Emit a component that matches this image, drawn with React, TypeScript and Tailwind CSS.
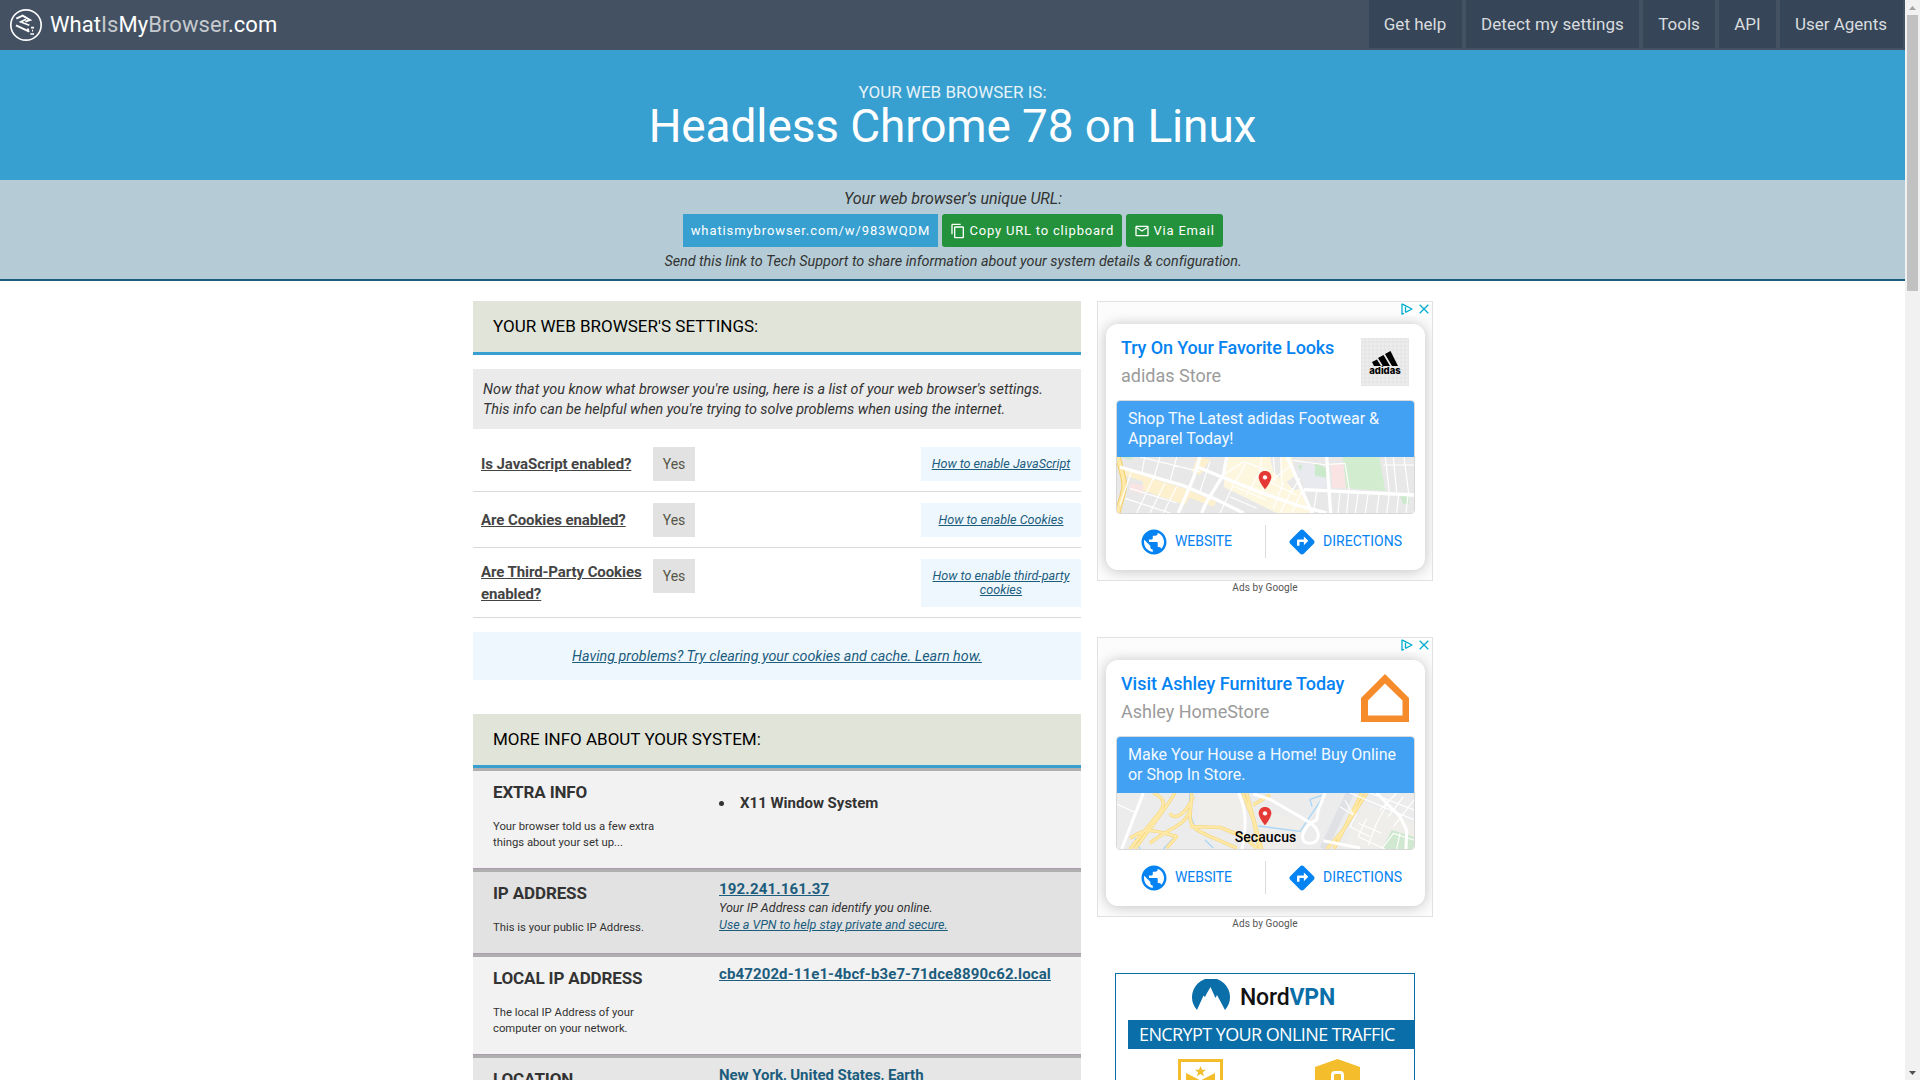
import type { ReactNode } from "react";
import { MdContentCopy, MdDirections, MdMailOutline, MdPublic } from "react-icons/md";

const NAV = [
  { label: "Get help", cls: "w-[93px] pr-px" },
  { label: "Detect my settings", cls: "w-[173px] tracking-[0.09px]" },
  { label: "Tools", cls: "w-[72px]" },
  { label: "API", cls: "w-[57px]" },
  { label: "User Agents", cls: "w-[123px] pr-px" },
];

function Logo() {
  return (
    <svg viewBox="30 27 96 96" className="h-8 w-8" fill="none" stroke="#fff">
      <circle cx="78" cy="75" r="45.5" strokeWidth="5" />
      <path d="M49 56L68 47L90 60L76 65" strokeWidth="6" />
      <path d="M78 58L62 66L88 76" strokeWidth="5" />
      <path d="M48 76L88 95" strokeWidth="6" />
      <path d="M93 83h9M81 88h6M96 92h3M91 102h11" strokeWidth="5" />
    </svg>
  );
}

function Header() {
  return (
    <header className="flex h-[50px] items-start justify-between bg-[#435163]">
      <div className="flex h-[50px] items-center pl-[10px]">
        <Logo />
        <div className="ml-2 text-[22px] leading-[50px] tracking-[0.06px] text-white">
          What<span className="text-[#c6cace]">Is</span>My<span className="text-[#c6cace]">Browser</span>.com
        </div>
      </div>
      <nav className="mr-[2px] flex gap-1">
        {NAV.map((n) => (
          <a
            key={n.label}
            className={`${n.cls} h-12 bg-[#364658] text-center text-[17px] leading-[49px] whitespace-nowrap text-[#d9dcdf]`}
          >
            {n.label}
          </a>
        ))}
      </nav>
    </header>
  );
}

function Hero() {
  return (
    <>
      <section className="h-[130px] bg-[#37a0d0] pt-8 text-center">
        <div className="text-[17px] leading-5 text-[#e8f3f9]">YOUR WEB BROWSER IS:</div>
        <h1 className="text-[46px] leading-[48px] tracking-[-0.13px] text-white">Headless Chrome 78 on Linux</h1>
      </section>
      <section className="h-[101px] border-b-2 border-[#1c5d7d] bg-[#b5ccd6] pt-[8px] text-center text-[#333]">
        <div className="pl-px text-[16px] leading-[21px] tracking-[-0.08px] italic">Your web browser&apos;s unique URL:</div>
        <div className="mt-[5px] flex justify-center gap-1 text-[13px] leading-[33px] whitespace-nowrap text-white">
          <div className="h-[33px] w-[255px] bg-[#37a0d0] pl-px tracking-[0.9px]">whatismybrowser.com/w/983WQDM</div>
          <div className="flex h-[33px] w-[180px] items-center rounded-[3px] bg-[#24913c] pl-2 tracking-[0.8px]">
            <MdContentCopy className="mr-1 h-4 w-4" />
            Copy URL to clipboard
          </div>
          <div className="flex h-[33px] w-[97px] items-center rounded-[3px] bg-[#24913c] pl-2 tracking-[0.8px]">
            <MdMailOutline className="mr-1 h-4 w-4" />
            Via Email
          </div>
        </div>
        <div className="mt-[5px] pl-px text-[14.4px] leading-5 tracking-[-0.025px] italic">
          Send this link to Tech Support to share information about your system details &amp; configuration.
        </div>
      </section>
    </>
  );
}

function SectionTitle({ children }: { children: ReactNode }) {
  return (
    <h2 className="h-[54px] border-b-[3px] border-[#37a0d0] bg-[#e1e4d9] pl-5 text-[17px] leading-[51px] text-black">
      {children}
    </h2>
  );
}

function Setting({ name, help, tall }: { name: string; help: string; tall?: boolean }) {
  return (
    <div className={`${tall ? "h-[70px]" : "h-14"} flex items-start border-b border-[#d9d9d9] pt-[11px]`}>
      <div
        className={`${tall ? "mt-[2px] leading-[22px]" : "leading-[34px]"} w-[180px] pl-2 text-[15px] font-bold tracking-[-0.09px] text-[#444] underline`}
      >
        {name}
      </div>
      <div className="h-[34px] w-[42px] bg-[#e2e2e2] text-center text-[14px] leading-[34px] text-[#555548]">Yes</div>
      <div className="ml-auto w-[160px] bg-[#eff7fe] px-[10px] py-[10px] text-center text-[12.6px] leading-[14px] text-[#1c5d7d] italic underline">
        {help}
      </div>
    </div>
  );
}

function InfoRow({
  title,
  note,
  cls,
  children,
}: {
  title: string;
  note: string;
  cls: string;
  children: ReactNode;
}) {
  return (
    <div className={`${cls} flex border-t-[3px] border-[#afafaf]`}>
      <div className="w-[226px] pt-[11px] pl-5 text-[#333]">
        <h3 className="text-[17px] leading-5 font-bold tracking-[-0.13px]">{title}</h3>
        <p className="mt-[17px] w-[180px] text-[11.3px] leading-4">{note}</p>
      </div>
      <div className="ml-5 flex-1 text-[15px] font-bold whitespace-nowrap text-[#333]">{children}</div>
    </div>
  );
}

function MainColumn() {
  return (
    <main className="w-[608px]">
      <SectionTitle>YOUR WEB BROWSER&apos;S SETTINGS:</SectionTitle>
      <p className="mt-[14px] h-[60px] bg-[#ebebeb] px-[10px] pt-[11px] text-[14.35px] leading-5 text-[#333] italic">
        <span className="tracking-[0.01px]">
          Now that you know what browser you&apos;re using, here is a list of your web browser&apos;s settings.
        </span>
        <br />
        <span className="tracking-[-0.03px]">
          This info can be helpful when you&apos;re trying to solve problems when using the internet.
        </span>
      </p>
      <div className="mt-[7px]">
        <Setting name="Is JavaScript enabled?" help="How to enable JavaScript" />
        <Setting name="Are Cookies enabled?" help="How to enable Cookies" />
        <Setting name="Are Third-Party Cookies enabled?" help="How to enable third-party cookies" tall />
      </div>
      <div className="mt-[14px] mb-[34px] h-12 bg-[#eff7fe] text-center text-[14.33px] leading-[48px] text-[#1c5d7d] italic underline">
        Having problems? Try clearing your cookies and cache. Learn how.
      </div>
      <SectionTitle>MORE INFO ABOUT YOUR SYSTEM:</SectionTitle>
      <InfoRow
        title="EXTRA INFO"
        note="Your browser told us a few extra things about your set up..."
        cls="h-[101px] border-b border-b-[#ab9dab] bg-[#f2f2f2]"
      >
        <div className="flex items-center pt-[21px] leading-[22px]">
          <span className="mr-[16px] h-[5px] w-[5px] rounded-full bg-[#333]" />
          X11 Window System
        </div>
      </InfoRow>
      <InfoRow
        title="IP ADDRESS"
        note="This is your public IP Address."
        cls="h-[85px] border-b border-b-[#ab9dab] bg-[#e2e2e2]"
      >
        <div className="pt-[7px] leading-5 tracking-[0.18px] text-[#1c5d7d] underline">192.241.161.37</div>
        <div className="text-[12.55px] leading-[17px] font-normal italic">
          Your IP Address can identify you online.
          <br />
          <span className="text-[#1c5d7d] underline">Use a VPN to help stay private and secure.</span>
        </div>
      </InfoRow>
      <InfoRow
        title="LOCAL IP ADDRESS"
        note="The local IP Address of your computer on your network."
        cls="h-[101px] border-b border-b-[#ab9dab] bg-[#f2f2f2]"
      >
        <div className="pt-[7px] leading-5 tracking-[0.12px] text-[#1c5d7d] underline">
          cb47202d-11e1-4bcf-b3e7-71dce8890c62.local
        </div>
      </InfoRow>
      <InfoRow title="LOCATION" note="Your approximate location." cls="h-[101px] bg-[#e6e6e6]">
        <div className="pt-[7px] leading-5 tracking-[-0.04px] text-[#1c5d7d] underline">
          New York, United States, Earth
        </div>
      </InfoRow>
    </main>
  );
}

function Pin({ y }: { y: number }) {
  return (
    <g>
      <path d={`M465 ${y}c-11 0-19 8-19 19 0 14 19 36 19 36s19-22 19-36c0-11-8-19-19-19z`} fill="#e53935" />
      <circle cx="465" cy={y + 19} r="6.5" fill="#fff" />
    </g>
  );
}

function StreetMap() {
  return (
    <svg viewBox="21 6 891 168" preserveAspectRatio="none" className="h-14 w-[297px]">
      <rect x="21" y="6" width="891" height="168" fill="#e8e8e8" />
      <path d="M355 6H545L560 80L600 174H500L340 95Z" fill="#fef7e0" />
      <path d="M30 40L220 100L320 140L310 155L210 118L40 60ZM100 80L240 125L225 150L95 105ZM262 6L300 14L270 60L245 50Z" fill="#fcf0cf" />
      <path d="M350 125L420 150L410 174H335ZM480 6H512L510 70L490 50ZM530 80L560 60L580 100L550 106Z" fill="#e8e8e8" />
      <path d="M575 20L650 40V100H590L560 50Z" fill="#e8eaf0" />
      <path d="M615 24L650 40V68L615 62ZM566 30h12l-8 20ZM870 122h26v26h-16ZM30 6h40l-10 8z" fill="#cbeacb" />
      <path d="M698 6H808L826 108L708 100Z" fill="#d1eccf" />
      <path d="M662 28L700 26L708 100H668ZM62 84L102 92L94 118L58 106Z" fill="#fae3e3" />
      <path d="M24 6C34 50 48 80 40 110C34 140 26 150 24 174" stroke="#f4cf6c" strokeWidth="17" fill="none" />
      <path d="M24 6C34 50 48 80 40 110C34 140 26 150 24 174" stroke="#ffe9a8" strokeWidth="11" fill="none" />
      <g stroke="#fff" fill="none">
        <path
          d="M30 36L220 92L320 134L400 174M270 6L250 70L205 174M350 6L340 60L290 140L275 174M262 36L440 108L560 150L650 174M532 6L606 174M650 6L662 174M582 104L912 120"
          strokeWidth="10"
        />
        <path
          d="M64 50L30 150M104 6L95 60M150 6L130 75M200 6L180 80M60 100L200 144M45 130L180 174M130 70L80 174M165 85L120 174M200 95L160 174M90 6L270 50M300 20L270 110M410 20L370 90L330 174M340 60L400 20L470 45M360 125L440 160M375 95L470 135M455 6L450 50L410 120M480 70L450 120M520 85L490 160M548 100L510 174M575 110L545 174M440 62L560 120M490 6L496 80M512 6L516 90M545 30L480 80M570 70L545 110M620 110L610 174M690 110L684 174M716 110L710 174M745 112L736 174M775 112L766 174M808 112L800 174M838 115L830 174M866 116L860 174M894 118L888 174M826 6L838 112M850 6L860 112M882 6L896 115M820 30H912M655 28L705 25L718 104M550 16L650 30"
          strokeWidth="3.5"
        />
      </g>
      <Pin y={48} />
    </svg>
  );
}

function HighwayMap() {
  const yellow =
    "M245 9L240 85C245 115 262 120 290 135L380 174M130 9C175 30 165 50 130 90L60 177M195 9C165 60 130 100 75 177M60 145C110 110 130 120 200 140L170 174M180 70C190 90 225 80 250 20M240 60C225 110 180 110 120 160M240 110L330 112L400 140L440 174M398 9L430 90L448 177M410 9L455 177M430 45L480 15M770 9L700 120L650 177M755 9L720 80L672 177";
  return (
    <svg viewBox="21 9 891 168" preserveAspectRatio="none" className="h-14 w-[297px]">
      <rect x="21" y="9" width="891" height="168" fill="#ececec" />
      <path d="M265 9H390L405 120L262 125ZM450 60L580 90L560 177H450ZM760 40L912 100V177H700Z" fill="#f0eeeb" />
      <path d="M845 120L912 140V177H815Z" fill="#cfe8cf" />
      <path
        d="M240 10C235 60 245 100 265 125M75 145L90 177M160 177L190 145M445 108L570 124L640 20M606 50L600 28L635 16M285 150L310 174"
        stroke="#a9d6f7"
        strokeWidth="4"
        fill="none"
      />
      <path d="M720 9L640 177" stroke="#dfe1e5" strokeWidth="24" />
      <path d={yellow} stroke="#f5d274" strokeWidth="10" fill="none" strokeLinejoin="round" />
      <path d={yellow} stroke="#ffe9a6" strokeWidth="7" fill="none" strokeLinejoin="round" />
      <g stroke="#fff" fill="none">
        <path
          d="M100 9L35 177M386 9C410 60 410 110 396 177M430 12L480 28L590 92C640 120 630 160 600 160C570 160 570 130 600 100L620 90L625 60L645 9M640 152L750 174M800 9L830 40L870 80L890 120L888 177"
          strokeWidth="9"
        />
        <path
          d="M21 42L80 70M705 30L730 75M720 9L912 90M690 50L730 75M740 70L720 110L780 140M770 85L745 140L825 177M745 100L815 130M800 100L775 165M830 45L800 100M860 9L810 60M880 20L835 80M912 30L850 110M780 9L912 60M815 177L850 130L912 150M870 130L860 177"
          strokeWidth="3.5"
        />
      </g>
      <Pin y={51} />
    </svg>
  );
}

function AdidasLogo() {
  return (
    <div className="flex h-12 w-12 flex-col items-center bg-[#e5e5e5] bg-[radial-gradient(#ececec_45%,#dedede_100%)] bg-[length:4px_4px] pt-[13px]">
      <svg viewBox="0 0 26 15" className="h-[15px] w-[26px] shrink-0" fill="#000">
        <path d="M0 11L5 8.5L9 15H2ZM6 7L11.5 4L18 15H11ZM13 3L18.5 0L26 15H20Z" />
      </svg>
      <div className="font-['Inter'] text-[9.5px] leading-[9px] font-extrabold text-black">adidas</div>
    </div>
  );
}

function HouseLogo() {
  return (
    <svg viewBox="0 0 48 48" className="h-12 w-12">
      <path d="M24 0L48 24V48H0V24ZM24 9.5L7 26.5V41.5H41.500V26.5Z" fill="#f68b2c" fillRule="evenodd" />
    </svg>
  );
}

function LocalAd({
  title,
  store,
  text,
  logo,
  map,
  town,
}: {
  title: ReactNode;
  store: string;
  text: ReactNode;
  logo: ReactNode;
  map: ReactNode;
  town?: string;
}) {
  return (
    <div className="h-[336px]">
      <div className="relative h-[280px] w-[336px] overflow-hidden border border-[#e1e1e1] bg-[#fcfcfc] pt-[22px] pl-2">
        <div className="absolute top-0 right-0 flex h-[14px] w-[31px] items-center justify-between bg-white/60 pr-[3px]">
          <svg viewBox="0 0 12 12" className="h-3 w-3" fill="none" stroke="#00aecd" strokeWidth="1.3">
            <path d="M1 .8L11 6L4.500 9.300M1 .8V11.200L3 10.400" strokeLinejoin="round" />
            <path d="M4.500 4V9.300M4.500 2.600V3.300" />
          </svg>
          <svg viewBox="0 0 10 10" className="h-[10px] w-[10px]" stroke="#00aecd" strokeWidth="1.3">
            <path d="M.7 .7L9.300 9.300M9.300 .7L.7 9.300" />
          </svg>
        </div>
        <div className="h-[246px] w-[319px] rounded-[12px] bg-white px-[10px] pt-[14px] shadow-[0_1px_14px_rgba(0,0,0,0.24)]">
          <div className="flex h-[62px] justify-between pr-[6px] pl-[5px]">
            <div className="whitespace-nowrap">
              <div className="text-[18px] leading-5 font-medium text-[#0583f2]">{title}</div>
              <div className="mt-2 text-[18px] leading-5 text-[#9b9b9b]">{store}</div>
            </div>
            {logo}
          </div>
          <div className="relative h-[114px] w-[299px] overflow-hidden rounded-[4px] border border-[#d8d8d8]">
            <div className="h-14 bg-[#42a1f3] pt-2 pl-[11px] text-[16px] leading-5 tracking-[-0.02px] text-[#f4faff]">
              {text}
            </div>
            {map}
            {town && (
              <div className="absolute inset-x-0 bottom-[2px] text-center text-[14px] leading-5 font-medium tracking-[0.1px] text-black">
                {town}
              </div>
            )}
          </div>
          <div className="mt-[11px] flex h-[33px] items-center text-[14px] text-[#0583f2]">
            <div className="flex h-full w-[150px] items-center border-r border-[#dcdcdc] pl-[23px]">
              <MdPublic className="mr-[6px] h-[30px] w-[30px]" />
              <span className="tracking-[-0.05px]">WEBSITE</span>
            </div>
            <div className="flex items-center pl-[21px]">
              <MdDirections className="mr-[6px] h-[30px] w-[30px]" />
              <span className="tracking-[0.05px]">DIRECTIONS</span>
            </div>
          </div>
        </div>
      </div>
      <div className="text-center text-[10px] leading-[14px] tracking-[0.1px] text-[#555]">Ads by Google</div>
    </div>
  );
}

function NordAd() {
  return (
    <div className="mx-auto h-[250px] w-[300px] border border-[#0a6ea9] bg-white">
      <div className="flex h-[46px] pl-[76px]">
        <svg viewBox="0 0 38 31" className="mt-[5px] h-[31px] w-[38px]">
          <path
            d="M5 31A19 19 0 1 1 33 31L25 16L23.500 19L18.500 8L15 14L13 18L11.500 16.500Z"
            fill="#0a6ea9"
          />
        </svg>
        <div className="mt-[10px] ml-[10px] text-[23px] leading-7 font-medium tracking-[-0.2px] text-[#111]">
          Nord<span className="font-bold text-[#0a6ea9]">VPN</span>
        </div>
      </div>
      <div className="ml-3 h-[29px] bg-[#0a6ea9] pl-[11px] font-['Open_Sans'] text-[18px] leading-[29px] font-medium tracking-[-0.6px] whitespace-nowrap text-white">
        ENCRYPT YOUR ONLINE TRAFFIC
      </div>
      <div className="mt-[10px] flex pl-[62px]">
        <svg viewBox="0 0 45 54" className="h-[54px] w-[45px]">
          <path d="M1.500 1.500H43.500V38L22.500 52L1.500 38Z" fill="#fff" stroke="#f3bd2b" strokeWidth="3" />
          <path d="M22.500 7L24 10.800H28L24.800 13.300L26 17.300L22.500 15L19 17.300L20.200 13.300L17 10.800H21Z" fill="#f3bd2b" />
          <path d="M8 14L22.500 21.500L37 14V34L22.500 44L8 34Z" fill="#f3bd2b" />
        </svg>
        <svg viewBox="0 0 45 54" className="ml-[92px] h-[54px] w-[45px]">
          <path d="M22.500 0L45 8V30C45 42 33 50 22.500 54C12 50 0 42 0 30V8Z" fill="#f3bd2b" />
          <path d="M17.500 24V16A2.500 2.500 0 0 1 20 13.500H25A2.500 2.500 0 0 1 27.500 16V24" fill="none" stroke="#fff" strokeWidth="3" />
          <rect x="13" y="23" width="19" height="14" fill="#fff" />
        </svg>
      </div>
    </div>
  );
}

function Scrollbar() {
  return (
    <div className="flex h-full w-[15px] flex-col items-center bg-[#f1f1f1]">
      <svg viewBox="0 0 15 15" className="h-[15px] w-[15px] shrink-0">
        <path d="M4 10L7.500 6L11 10Z" fill="#a3a3a3" />
      </svg>
      <div className="h-[276px] w-[11px] bg-[#c1c1c1]" />
      <svg viewBox="0 0 15 15" className="mt-auto h-[15px] w-[15px] shrink-0">
        <path d="M4 6L7.500 10L11 6Z" fill="#505050" />
      </svg>
    </div>
  );
}

export default function App() {
  return (
    <div className="flex h-[1080px] w-[1920px] overflow-hidden bg-white font-['Roboto',sans-serif]">
      <div className="h-full w-[1905px] overflow-hidden">
        <Header />
        <Hero />
        <div className="flex gap-4 pt-5 pl-[473px]">
          <MainColumn />
          <aside className="w-[336px]">
            <LocalAd
              title={<span className="tracking-[-0.13px]">Try On Your Favorite Looks</span>}
              store="adidas Store"
              text={
                <>
                  Shop The Latest adidas Footwear &amp;
                  <br />
                  Apparel Today!
                </>
              }
              logo={<AdidasLogo />}
              map={<StreetMap />}
            />
            <LocalAd
              title={<span className="tracking-[-0.03px]">Visit Ashley Furniture Today</span>}
              store="Ashley HomeStore"
              text={
                <>
                  Make Your House a Home! Buy Online
                  <br />
                  or Shop In Store.
                </>
              }
              logo={<HouseLogo />}
              map={<HighwayMap />}
              town="Secaucus"
            />
            <NordAd />
          </aside>
        </div>
      </div>
      <Scrollbar />
    </div>
  );
}
